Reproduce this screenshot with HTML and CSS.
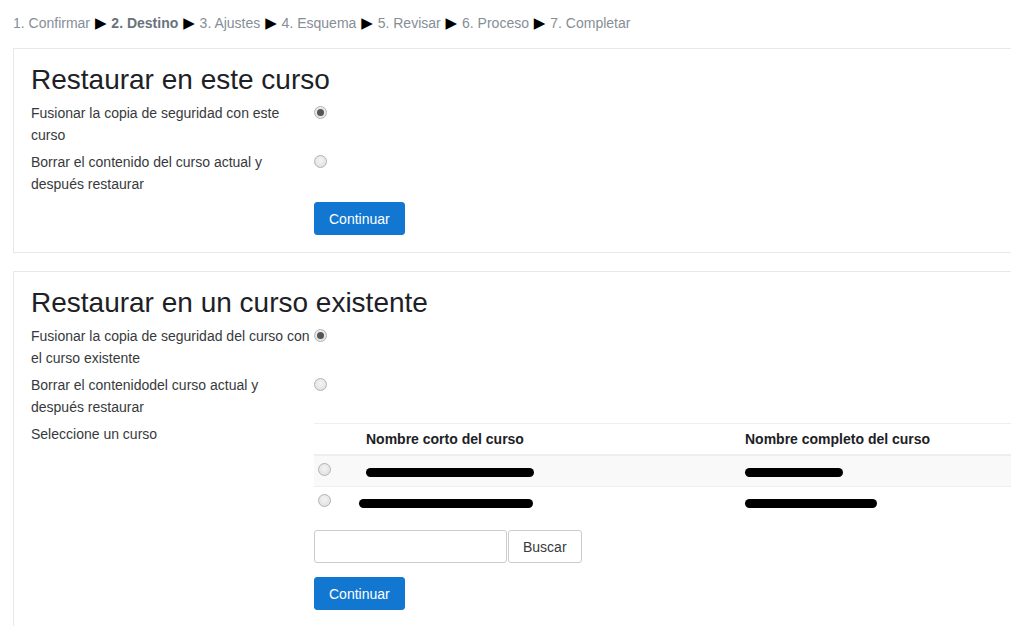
FILE: index.html
```html
<!DOCTYPE html>
<html lang="es">
<head>
    <meta charset="UTF-8">
    <title>Restaurar curso</title>
    <link rel="stylesheet" href="styles.css">
</head>
<body>
    <div class="page">
        <div class="steps">
            1. Confirmar <span class="arrow">&#9654;</span> <b>2. Destino</b> <span class="arrow">&#9654;</span> 3. Ajustes <span class="arrow">&#9654;</span> 4. Esquema <span class="arrow">&#9654;</span> 5. Revisar <span class="arrow">&#9654;</span> 6. Proceso <span class="arrow">&#9654;</span> 7. Completar
        </div>

        <div class="box">
            <h2>Restaurar en este curso</h2>
            <div class="fitem">
                <label>Fusionar la copia de seguridad con este curso</label>
                <div><input type="radio" name="target1" checked></div>
            </div>
            <div class="fitem">
                <label>Borrar el contenido del curso actual y después restaurar</label>
                <div><input type="radio" name="target1"></div>
            </div>
            <div class="fitem last">
                <div></div>
                <div><button class="btn-primary">Continuar</button></div>
            </div>
        </div>

        <div class="box">
            <h2>Restaurar en un curso existente</h2>
            <div class="fitem">
                <label>Fusionar la copia de seguridad del curso con el curso existente</label>
                <div><input type="radio" name="target2" checked></div>
            </div>
            <div class="fitem">
                <label>Borrar el contenidodel curso actual y después restaurar</label>
                <div><input type="radio" name="target2"></div>
            </div>
            <div class="fitem select-row">
                <label>Seleccione un curso</label>
                <div>
                    <table class="courses">
                        <thead>
                            <tr>
                                <th class="c0"></th>
                                <th class="c1">Nombre corto del curso</th>
                                <th>Nombre completo del curso</th>
                            </tr>
                        </thead>
                        <tbody>
                            <tr class="odd">
                                <td class="c0"><input type="radio" name="course"></td>
                                <td class="c1"><span class="redact" style="width:168px"></span></td>
                                <td><span class="redact" style="width:98px"></span></td>
                            </tr>
                            <tr>
                                <td class="c0"><input type="radio" name="course"></td>
                                <td class="c1"><span class="redact shift" style="width:174px"></span></td>
                                <td><span class="redact" style="width:132px"></span></td>
                            </tr>
                        </tbody>
                    </table>
                    <div class="search">
                        <input type="text" class="search-input"><button class="btn-secondary">Buscar</button>
                    </div>
                    <button class="btn-primary">Continuar</button>
                </div>
            </div>
        </div>
    </div>
</body>
</html>
```

FILE: styles.css
```css
html, body {
    overflow: hidden;
}
body {
    margin: 0;
    font-family: "Liberation Sans", Arial, sans-serif;
    font-size: 14px;
    line-height: 22px;
    color: #373a3c;
    background-color: #fff;
}
.page {
    padding: 12px 0 0 13px;
}
.steps {
    color: #868e96;
    margin-bottom: 14px;
}
.steps b {
    color: #6a737b;
}
.steps .arrow {
    color: #000;
    font-size: 15px;
    font-family: "DejaVu Sans", sans-serif;
    margin: 0 1px;
}
.box {
    width: 1040px;
    border: 1px solid #e8e8e8;
    padding: 13px 17px 17px;
    margin-bottom: 18px;
}
.box h2 {
    margin: 0 0 4px;
    font-size: 28px;
    font-weight: normal;
    line-height: 36px;
    color: #1d2125;
}
.fitem {
    display: grid;
    grid-template-columns: 283px 1fr;
    margin-bottom: 5px;
}
.fitem.last {
    margin-bottom: 0;
}
.fitem label {
    padding-right: 4px;
}
input[type="radio"] {
    -webkit-appearance: none;
    appearance: none;
    width: 13px;
    height: 13px;
    margin: 4px 0 0;
    border: 1px solid #b4b4b4;
    border-radius: 50%;
    background: radial-gradient(circle at 50% 40%, #f4f4f4 0%, #dcdcdc 100%);
    position: relative;
}
input[type="radio"]:checked::after {
    content: "";
    position: absolute;
    left: 2px;
    top: 2px;
    width: 7px;
    height: 7px;
    border-radius: 50%;
    background: #555;
}
.btn-primary {
    margin-top: 2px;
    font-family: inherit;
    font-size: 14px;
    color: #fff;
    background-color: #1177d1;
    border: 1px solid #1177d1;
    border-radius: 3px;
    height: 33px;
    padding: 0 14px;
}
.btn-secondary {
    font-family: inherit;
    font-size: 14px;
    color: #373a3c;
    background-color: #fff;
    border: 1px solid #ccc;
    border-radius: 3px;
    height: 33px;
    padding: 0 14px;
    margin-left: 1px;
}
.courses {
    width: 720px;
    border-collapse: collapse;
    text-align: left;
}
.courses th {
    font-weight: bold;
    color: #1d2125;
    height: 30px;
    padding: 0;
    border-top: 1px solid #eceeef;
}
.courses td {
    height: 30px;
    padding: 0;
    border-top: 1px solid #eceeef;
}
.courses tbody tr:first-child td {
    border-top: 2px solid #eceeef;
}
.courses .odd {
    background-color: #f9f9f9;
}
.courses .c0 {
    width: 48px;
    padding-left: 4px;
}
.courses .c0 input {
    margin: 3px 0 0;
}
.courses .c1 {
    width: 379px;
}
.redact {
    display: inline-block;
    height: 9px;
    border-radius: 5px;
    background-color: #000;
    vertical-align: middle;
}
.redact.shift {
    margin-left: -7px;
}
.search {
    display: flex;
    margin: 13px 0 12px;
}
.search-input {
    width: 193px;
    height: 33px;
    box-sizing: border-box;
    border: 1px solid #ccc;
    border-radius: 3px;
    padding: 0 8px;
}
```
